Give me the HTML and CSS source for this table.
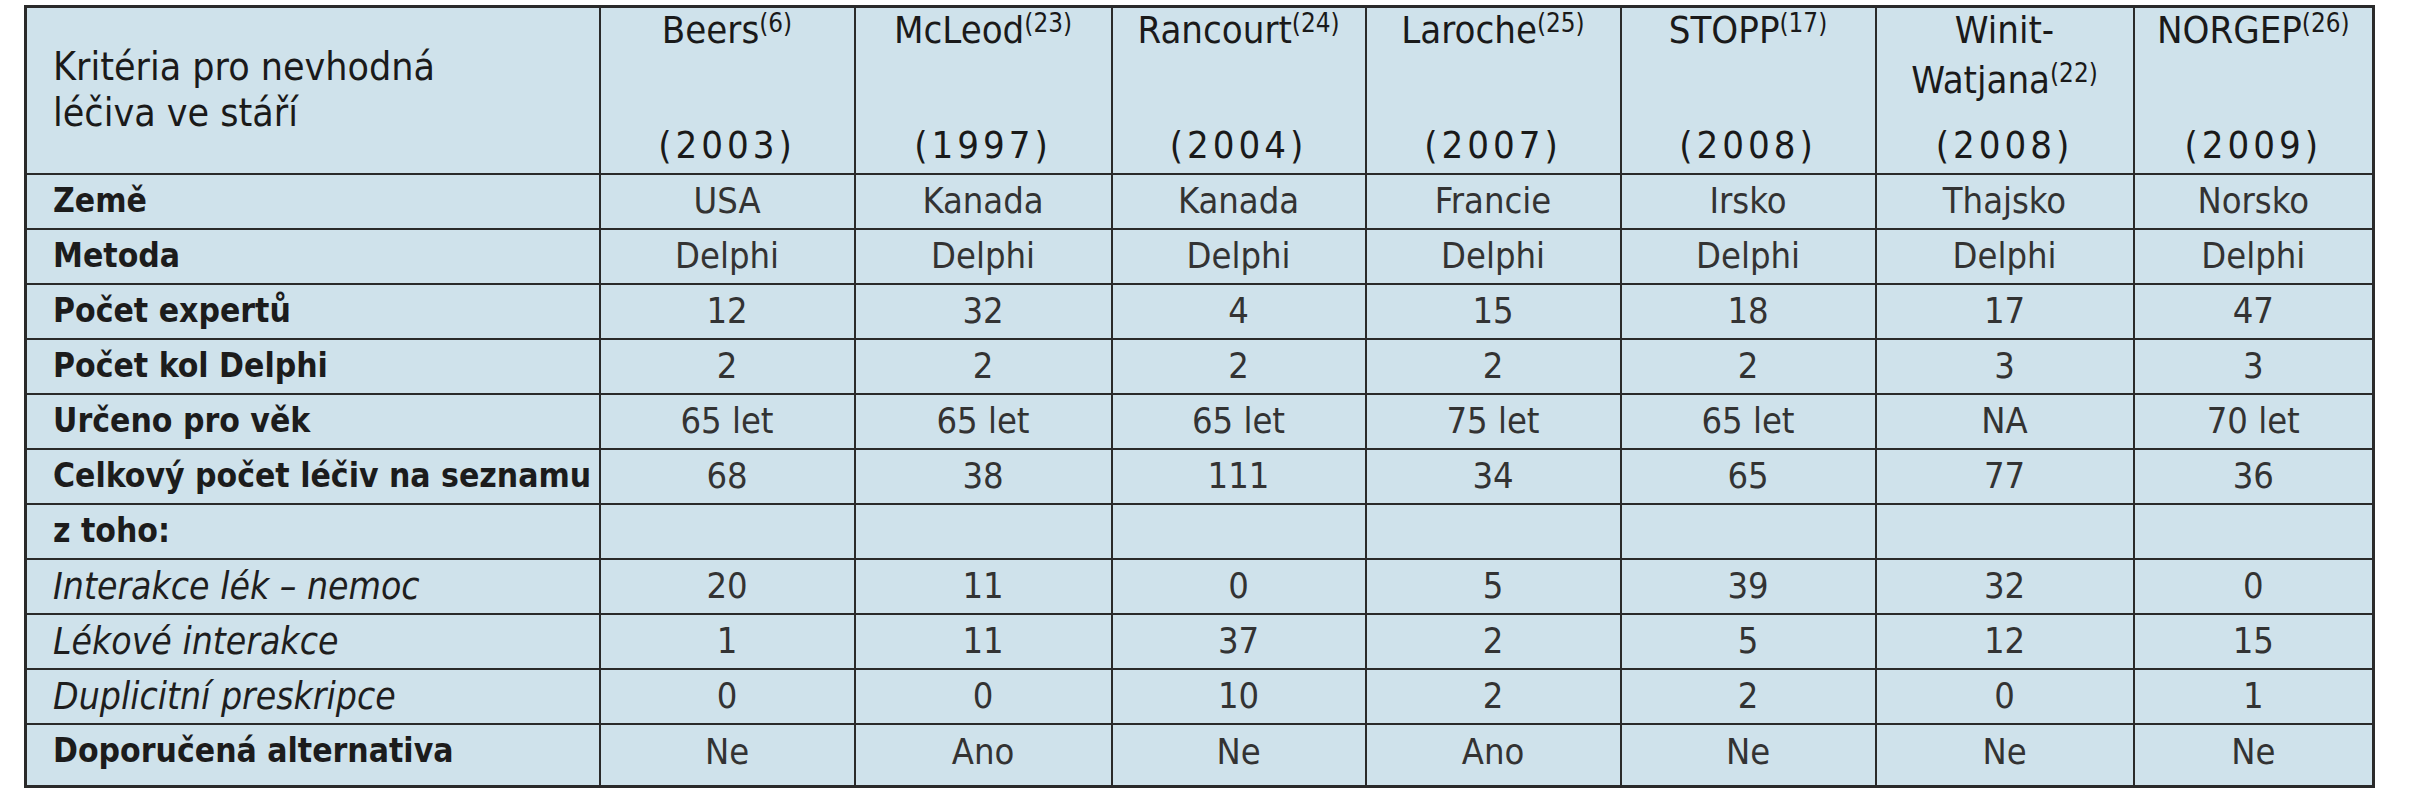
FILE: index.html
```html
<!DOCTYPE html>
<html lang="cs">
<head>
<meta charset="utf-8">
<title>Kritéria pro nevhodná léčiva ve stáří</title>
<link rel="stylesheet" href="styles.css">
</head>
<body>
<table class="crit">
  <colgroup>
    <col class="c-label">
    <col class="c-a"><col class="c-b"><col class="c-c"><col class="c-d"><col class="c-e"><col class="c-f"><col class="c-g">
  </colgroup>
  <thead>
    <tr class="head">
      <th class="label-head">Kritéria pro nevhodná<br>léčiva ve stáří</th>
      <th><div class="hcell"><span class="name">Beers<sup>(6)</sup></span><span class="year">(2003)</span></div></th>
      <th><div class="hcell"><span class="name">McLeod<sup>(23)</sup></span><span class="year">(1997)</span></div></th>
      <th><div class="hcell"><span class="name">Rancourt<sup>(24)</sup></span><span class="year">(2004)</span></div></th>
      <th><div class="hcell"><span class="name">Laroche<sup>(25)</sup></span><span class="year">(2007)</span></div></th>
      <th><div class="hcell"><span class="name">STOPP<sup>(17)</sup></span><span class="year">(2008)</span></div></th>
      <th><div class="hcell"><span class="name">Winit-<br>Watjana<sup>(22)</sup></span><span class="year">(2008)</span></div></th>
      <th><div class="hcell"><span class="name">NORGEP<sup>(26)</sup></span><span class="year">(2009)</span></div></th>
    </tr>
  </thead>
  <tbody>
    <tr><th>Země</th><td>USA</td><td>Kanada</td><td>Kanada</td><td>Francie</td><td>Irsko</td><td>Thajsko</td><td>Norsko</td></tr>
    <tr><th>Metoda</th><td>Delphi</td><td>Delphi</td><td>Delphi</td><td>Delphi</td><td>Delphi</td><td>Delphi</td><td>Delphi</td></tr>
    <tr><th>Počet expertů</th><td>12</td><td>32</td><td>4</td><td>15</td><td>18</td><td>17</td><td>47</td></tr>
    <tr><th>Počet kol Delphi</th><td>2</td><td>2</td><td>2</td><td>2</td><td>2</td><td>3</td><td>3</td></tr>
    <tr><th>Určeno pro věk</th><td>65 let</td><td>65 let</td><td>65 let</td><td>75 let</td><td>65 let</td><td>NA</td><td>70 let</td></tr>
    <tr><th>Celkový počet léčiv na seznamu</th><td>68</td><td>38</td><td>111</td><td>34</td><td>65</td><td>77</td><td>36</td></tr>
    <tr><th>z toho:</th><td></td><td></td><td></td><td></td><td></td><td></td><td></td></tr>
    <tr><th class="it">Interakce lék – nemoc</th><td>20</td><td>11</td><td>0</td><td>5</td><td>39</td><td>32</td><td>0</td></tr>
    <tr><th class="it">Lékové interakce</th><td>1</td><td>11</td><td>37</td><td>2</td><td>5</td><td>12</td><td>15</td></tr>
    <tr><th class="it">Duplicitní preskripce</th><td>0</td><td>0</td><td>10</td><td>2</td><td>2</td><td>0</td><td>1</td></tr>
    <tr class="last"><th>Doporučená alternativa</th><td>Ne</td><td>Ano</td><td>Ne</td><td>Ano</td><td>Ne</td><td>Ne</td><td>Ne</td></tr>
  </tbody>
</table>
</body>
</html>
```

FILE: styles.css
```css
html, body {
  margin: 0;
  padding: 0;
  background: #ffffff;
}

body {
  font-family: "DejaVu Sans Condensed", "Liberation Sans", sans-serif;
  color: #2b2b2b;
}

.crit {
  margin: 5px 0 0 24px;
  border-collapse: collapse;
  table-layout: fixed;
  width: 2348px;
  background: #cfe2eb;
  border: 3px solid #2a2a2a;
}

.c-label { width: 574px; }
.c-a { width: 255px; }
.c-b { width: 257px; }
.c-c { width: 254px; }
.c-d { width: 255px; }
.c-e { width: 255px; }
.c-f { width: 258px; }
.c-g { width: 240px; }

.crit th,
.crit td {
  border: 2px solid #2a2a2a;
  padding: 0;
  font-size: 36px;
  line-height: 1;
}

.crit tbody tr {
  height: 55px;
}

.crit tbody tr.last {
  height: 63px;
}

.crit tbody tr.last th,
.crit tbody tr.last td {
  vertical-align: top;
  padding-top: 9px;
}

.crit tbody th {
  text-align: left;
  padding-left: 26px;
  font-weight: bold;
  font-size: 33.4px;
  color: #1c1c1c;
  white-space: nowrap;
}

.crit tbody th.it {
  font-weight: normal;
  font-style: italic;
  font-size: 37px;
  color: #1e1e1e;
}

.crit tbody td {
  text-align: center;
  font-weight: normal;
  color: #333333;
}

.crit thead tr.head {
  height: 167px;
}

.crit thead th {
  font-weight: normal;
  color: #1a1a1a;
  font-size: 38px;
  vertical-align: top;
}

.crit thead th.label-head {
  text-align: left;
  vertical-align: middle;
  padding-left: 26px;
  font-size: 39px;
  line-height: 46px;
}

.hcell {
  height: 164px;
  display: flex;
  flex-direction: column;
  justify-content: space-between;
  align-items: center;
  text-align: center;
  padding: 0 0 5px;
  box-sizing: border-box;
}

.hcell .name {
  line-height: 50px;
  margin-top: -3px;
}

.hcell .year {
  line-height: 44px;
  letter-spacing: 4px;
}

.hcell sup {
  font-size: 0.68em;
  vertical-align: 0.42em;
  line-height: 0;
}
```
